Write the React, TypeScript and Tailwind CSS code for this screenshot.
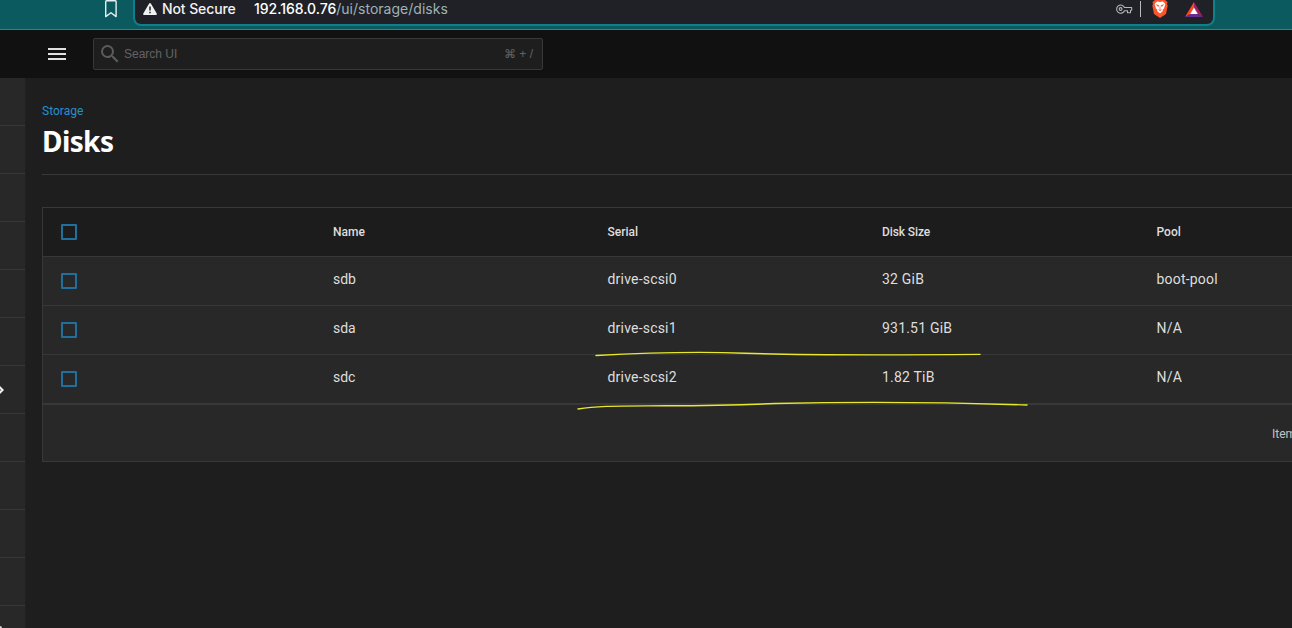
import React from "react";

const disks = [
  { name: "sdb", serial: "drive-scsi0", size: "32 GiB", pool: "boot-pool" },
  { name: "sda", serial: "drive-scsi1", size: "931.51 GiB", pool: "N/A" },
  { name: "sdc", serial: "drive-scsi2", size: "1.82 TiB", pool: "N/A" },
];

function Checkbox() {
  return <span className="block h-4 w-4 rounded-[1px] border-2 border-[#206f9f]" />;
}

function BrowserBar() {
  return (
    <div className="flex h-[30px] shrink-0 items-start border-b border-[#3b7f88] bg-[#0b5a60]">
      <div className="flex w-[133px] shrink-0 justify-end pr-[15px]">
        <svg className="h-[18px] w-[14px]" viewBox="0 0 14 18" fill="none" stroke="#e9efef" strokeWidth="1.4" strokeLinejoin="round">
          <path d="M2.5 0.8h9q.6 0 .6.8v15L7 12.8 1.7 16.6V1.6q0-.8.8-.8z" />
        </svg>
      </div>
      <div className="flex h-[26px] w-[1082px] shrink-0 items-start rounded-b-[8px] border-2 border-t-0 border-[#0f7f89] bg-[#202127] font-['Inter'] text-[14px] leading-[18px]">
        <svg className="ml-2 mt-[3px] h-[12px] w-[14px] shrink-0" viewBox="0 0 14 12">
          <path d="M6 .7q1-1.2 2 0l5.6 9.6q.7 1.7-1 1.7H1.4Q-.3 12 .4 10.3z" fill="#f1f1f2" />
          <path d="M7 3.5v4M7 8.8v1.5" stroke="#202127" strokeWidth="1.5" />
        </svg>
        <span className="ml-[5px] w-[92px] shrink-0 whitespace-nowrap font-medium tracking-[-0.1px] text-[#f2f2f3]">Not Secure</span>
        <span className="whitespace-nowrap text-[#9fb3b5]">
          <span className="font-medium tracking-[-0.03px] text-white">192.168.0.76</span>
          <span className="tracking-[0.02px]">/ui/storage/disks</span>
        </span>
        <svg className="ml-auto mt-[4px] h-[11px] w-[17px]" viewBox="0 0 17 11" fill="none" stroke="#b5b6b9" strokeWidth="1.1">
          <path d="M8.5 3.5A4.100 4.100 0 1 0 8.500 6.800H11.500V8.800h3V6.500l1.200-.5V3.500z" strokeLinejoin="round" />
          <circle cx="4.600" cy="5" r="1.400" />
        </svg>
        <span className="ml-[7px] mt-px h-4 w-px bg-[#b9babd]" />
        <svg className="ml-[11px] h-[18px] w-4" viewBox="0 0 16 18">
          <path d="M3 0h10l2.500 2-.5 2 .7 1.500-1.700 8.500L8 18l-6-4L.3 5.500 1 4 .5 2z" fill="#fb542b" />
          <path d="M5 1.500l3 .5 3-.5L13.300 4 12 8.500l-1.600 1.600.6.900-3 2.500L5 11l.6-.9L4 8.500 2.700 4z" fill="#fff" />
          <path d="M4.500 4.800l2.500.8-.7.800zM11.500 4.800l-2.500.8.700.800zM8 6.500v3M6.500 9.700l1.500.8 1.500-.8" fill="#fb542b" stroke="#fb542b" strokeWidth=".7" />
        </svg>
        <svg className="ml-[17px] mr-[10px] mt-[2px] h-[15px] w-[18px]" viewBox="0 0 18 15">
          <path d="M9 0L0 15l5.500-3L9 6z" fill="#ff4724" />
          <path d="M9 0l9 15-5.500-3L9 6z" fill="#9e1f63" />
          <path d="M0 15h18l-5.500-3h-7z" fill="#662d91" />
          <path d="M9 5.500L12.800 12H5.200z" fill="#fff" />
        </svg>
      </div>
    </div>
  );
}

function Toolbar() {
  return (
    <header className="flex h-12 shrink-0 items-start bg-[#111111]">
      <div className="ml-12 mt-[18px] flex w-[18px] flex-col gap-[3px]">
        <span className="h-[2px] bg-[#e0e0e0]" />
        <span className="h-[2px] bg-[#e0e0e0]" />
        <span className="h-[2px] bg-[#e0e0e0]" />
      </div>
      <div className="ml-[27px] mt-2 flex h-8 w-[450px] items-center rounded-[2px] border border-[#383838] bg-[#1e1e1e] font-['Liberation_Sans'] text-[12px] text-[#636363]">
        <svg className="ml-1 h-6 w-6" viewBox="0 0 24 24" fill="#5c5c5c">
          <path d="M15.500 14h-.79l-.28-.27A6.470 6.470 0 0 0 16 9.500 6.500 6.500 0 1 0 9.500 16c1.610 0 3.090-.59 4.230-1.570l.27.28v.79l5 4.990L20.490 19zm-6 0a4.500 4.500 0 1 1 0-9 4.500 4.500 0 0 1 0 9z" />
        </svg>
        <span className="ml-[2px]">Search UI</span>
        <span className="ml-auto mr-[9px]">⌘ + /</span>
      </div>
    </header>
  );
}

function Sidebar() {
  return (
    <aside className="relative w-[26px] shrink-0 overflow-hidden border-r border-[#202020] bg-[#282828]">
      {Array.from({ length: 12 }, (_, i) => (
        <div key={i} className="h-12 w-[25px] border-b border-[#383838]" />
      ))}
      <svg className="absolute left-[-4px] top-[307px] h-[10px] w-2" viewBox="0 0 8 10" fill="none" stroke="#f0f0f0" strokeWidth="2.2">
        <path d="M2.500 1l4 4-4 4" />
      </svg>
      <span className="absolute bottom-0 left-0 h-[2px] w-[2px] rounded-tr-[2px] bg-[#d0d0d0]" />
    </aside>
  );
}

const columns = "grid h-[49px] grid-cols-[274px_274.5px_274.5px_274.5px_274.5px]";

function DisksTable() {
  return (
    <section className="mt-8 w-[1390px] border border-[#383838] bg-[#282828] text-[#dedede]">
      <div className={columns + " border-b border-[#383838] bg-[#1c1c1c] text-[12px] font-medium leading-[49px]"}>
        <div className="pl-[18px] pt-4"><Checkbox /></div>
        <div className="pl-4">Name</div>
        <div className="pl-4">Serial</div>
        <div className="pl-4 tracking-[-0.1px]">Disk Size</div>
        <div className="pl-4">Pool</div>
      </div>
      {disks.map((disk) => (
        <div key={disk.name} className={columns + " border-b border-[#383838] text-[14px] leading-[44px] tracking-[0.2px]"}>
          <div className="pl-[18px] pt-4"><Checkbox /></div>
          <div className="pl-4 tracking-normal">{disk.name}</div>
          <div className="pl-4">{disk.serial}</div>
          <div className="pl-4">{disk.size}</div>
          <div className="pl-4">{disk.pool}</div>
        </div>
      ))}
      <div className="h-[57px] border-t border-[#383838] pl-[1229px] text-[12px] leading-[59px] text-[#c4c4c4]">Items per page:</div>
    </section>
  );
}

export default function App() {
  return (
    <div className="relative flex h-[628px] w-[1292px] flex-col overflow-hidden bg-[#1e1e1e] font-['Roboto',sans-serif]">
      <BrowserBar />
      <Toolbar />
      <div className="flex min-h-0 flex-1">
        <Sidebar />
        <main className="min-w-0 flex-1 overflow-hidden pl-4 pt-[25px]">
          <div className="text-[12px] leading-4 tracking-[0.02px] text-[#2590cf]">Storage</div>
          <h1 className="mt-[5px] h-[51px] border-b border-[#383838] font-['Noto_Sans'] text-[28px] font-bold leading-[34px] tracking-[-0.6px] text-white">Disks</h1>
          <DisksTable />
        </main>
      </div>
      <svg className="pointer-events-none absolute inset-0 h-full w-full" viewBox="0 0 1292 628" fill="none" stroke="#e8e82c" strokeWidth="1.4" strokeLinecap="round">
        <path d="M596 355.500C650 352.500 700 351.500 745 353.200S860 355.300 980 354.400" />
        <path d="M578 409C598 405.500 620 406 665 405.800S745 404.800 775 403.500C860 401.500 940 402 1027 405" />
      </svg>
    </div>
  );
}
